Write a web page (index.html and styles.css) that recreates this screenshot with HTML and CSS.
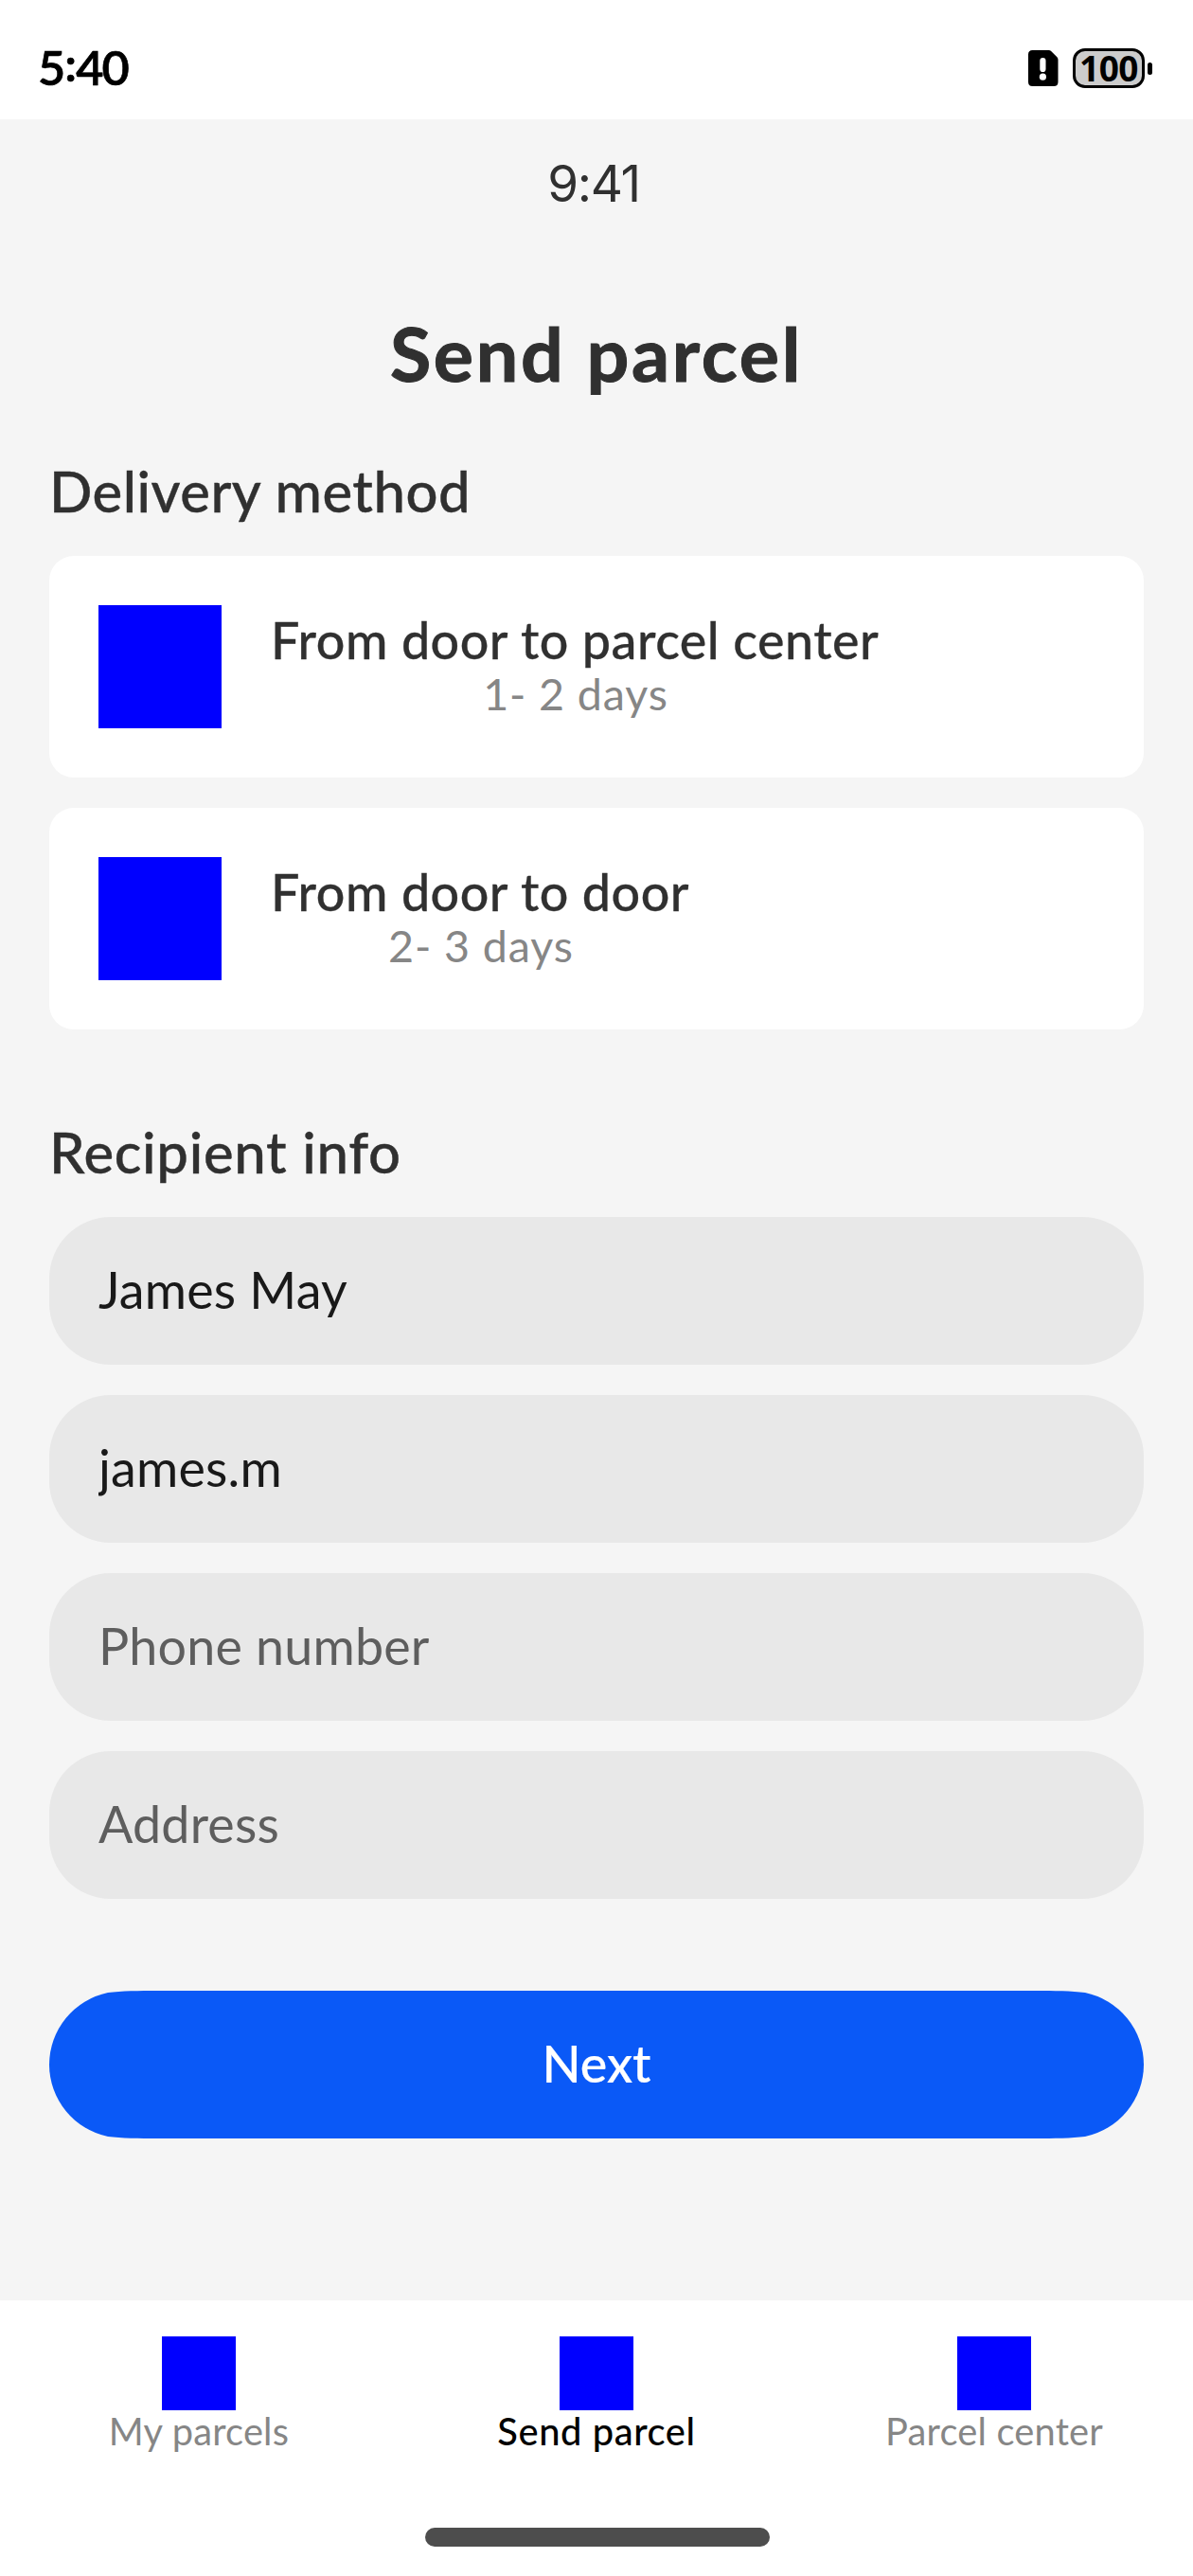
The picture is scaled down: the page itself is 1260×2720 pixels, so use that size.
FILE: index.html
```html
<!DOCTYPE html>
<html lang="en">
<head>
  <meta charset="utf-8">
  <title>Send parcel</title>
  <link rel="stylesheet" href="styles.css">
</head>
<body>
  <header class="status-bar">
    <span class="status-time">5<span class="colon">:</span>40</span>
    <div class="status-icons">
      <svg class="sim" width="32" height="38" viewBox="0 0 32 38">
        <path d="M4.5 0H21.5Q23.2 0 24.4 1.2L30.4 7.2Q31.5 8.4 31.5 10V33.5Q31.5 38 27 38H4.5Q0 38 0 33.5V4.500Q0 0 4.500 0Z" fill="#000"/>
        <rect x="12.300" y="8" width="6.200" height="15" rx="3.100" fill="#fff"/>
        <circle cx="15.400" cy="28.200" r="3.600" fill="#fff"/>
      </svg>
      <div class="battery">
        <span class="battery-level">100</span>
      </div>
      <span class="battery-tip"></span>
    </div>
  </header>

  <main class="page">
    <p class="clock">9:41</p>
    <h1 class="title">Send parcel</h1>

    <section class="section">
      <h2 class="section-title">Delivery method</h2>
      <div class="stack">
        <article class="card">
          <span class="card-image"></span>
          <div class="card-text">
            <span class="card-name">From door to parcel center</span>
            <span class="card-time">1- 2 days</span>
          </div>
        </article>
        <article class="card">
          <span class="card-image"></span>
          <div class="card-text">
            <span class="card-name">From door to door</span>
            <span class="card-time">2- 3 days</span>
          </div>
        </article>
      </div>
    </section>

    <section class="section recipient">
      <h2 class="section-title wide">Recipient info</h2>
      <form class="stack">
        <input class="field" type="text" value="James May">
        <input class="field" type="text" value="james.m">
        <input class="field" type="text" placeholder="Phone number">
        <input class="field" type="text" placeholder="Address">
        <button class="next" type="button">Next</button>
      </form>
    </section>
  </main>

  <footer class="bottom">
    <nav class="tabs">
      <a class="tab"><span class="tab-icon"></span>My parcels</a>
      <a class="tab active"><span class="tab-icon"></span>Send parcel</a>
      <a class="tab"><span class="tab-icon"></span>Parcel center</a>
    </nav>
    <span class="home-bar"></span>
  </footer>
</body>
</html>
```
FILE: styles.css
```css
* {
  box-sizing: border-box;
  margin: 0;
  padding: 0;
}

body {
  display: flex;
  flex-direction: column;
  width: 1260px;
  height: 2720px;
  background: #fff;
  color: #303030;
  font-family: Lato, "Noto Sans", sans-serif;
  overflow: hidden;
}

.status-bar {
  display: flex;
  flex: none;
  justify-content: space-between;
  align-items: center;
  height: 126px;
  padding: 18px 43px 0 40px;
  color: #000;
}

.status-time {
  font-size: 50.4px;
  font-weight: 600;
  line-height: 60px;
  letter-spacing: -1.9px;
  padding-bottom: 2px;
  -webkit-text-stroke: 0.7px;
}

.colon {
  margin: 0 1px;
  vertical-align: 4px;
  line-height: 1;
}

.status-icons {
  display: flex;
  align-items: center;
}

.sim {
  margin: 0 15px 1px 0;
}

.battery {
  display: flex;
  justify-content: center;
  align-items: center;
  width: 76px;
  height: 42px;
  border: 3px solid #000;
  border-radius: 13px;
  background: #ccc;
}

.battery-level {
  font-family: "Noto Sans", sans-serif;
  font-size: 37px;
  font-weight: 700;
  line-height: 36px;
  letter-spacing: -0.5px;
}

.battery-tip {
  width: 5px;
  height: 13px;
  margin-left: 3px;
  border-radius: 2.5px;
  background: #000;
}

.page {
  flex: none;
  height: 2303px;
  padding: 38px 52px 0;
  background: #f5f5f5;
}

.clock {
  font-family: Inter, sans-serif;
  font-size: 53px;
  line-height: 60px;
  letter-spacing: -1.3px;
  text-align: center;
  padding-right: 6px;
}

.title {
  margin-top: 99px;
  font-size: 79px;
  font-weight: 700;
  line-height: 100px;
  letter-spacing: 2.7px;
  text-align: center;
  -webkit-text-stroke: 1px;
}

.section-title {
  margin-top: 64px;
  font-size: 59.8px;
  font-weight: 500;
  line-height: 62px;
  letter-spacing: 0.5px;
  -webkit-text-stroke: 0.4px;
}

.section-title.wide {
  margin-top: 98px;
  letter-spacing: 0.7px;
}

.stack {
  display: flex;
  flex-direction: column;
  gap: 32px;
  margin-top: 38px;
}

.card {
  display: flex;
  align-items: center;
  gap: 52px;
  height: 234px;
  padding: 0 52px;
  border-radius: 26px;
  background: #fff;
}

.card-image {
  width: 130px;
  height: 130px;
  background: #00f;
}

.card-text {
  display: flex;
  flex-direction: column;
  align-items: center;
  padding-bottom: 6px;
}

.card-name {
  font-size: 53.8px;
  font-weight: 500;
  line-height: 62px;
  letter-spacing: 0.48px;
  -webkit-text-stroke: 0.3px;
}

.card-time {
  color: #868686;
  font-size: 46.6px;
  line-height: 53px;
  letter-spacing: 0.9px;
  padding-left: 2px;
}

.field {
  width: 100%;
  height: 156px;
  padding: 0 52px 4px;
  border: 0;
  border-radius: 65px;
  background: #e8e8e8;
  color: #191919;
  font: 400 53.8px Lato, "Noto Sans", sans-serif;
  letter-spacing: 0.2px;
}

.field::placeholder {
  color: #5e5e5e;
  opacity: 1;
}

.next {
  height: 156px;
  margin-top: 65px;
  padding-bottom: 4px;
  border: 0;
  background: #0a59f7;
  color: #fff;
  font: 500 53.8px Lato, "Noto Sans", sans-serif;
  -webkit-text-stroke: 0.2px;
  /* capsule with ends that ease into the straight edges */
  clip-path: path("M0 78A78 78 0 0 1 62 2C76 .3 95 0 115 0H1041C1061 0 1080 .3 1094 2A78 78 0 0 1 1156 78A78 78 0 0 1 1094 154C1080 155.7 1061 156 1041 156H115C95 156 76 155.7 62 154A78 78 0 0 1 0 78Z");
}

.bottom {
  display: flex;
  flex: 1;
  flex-direction: column;
  align-items: center;
  padding-top: 38px;
}

.tabs {
  display: grid;
  grid-template-columns: repeat(3, 1fr);
  width: 100%;
}

.tab {
  display: flex;
  flex-direction: column;
  align-items: center;
  color: #868686;
  font-size: 39.8px;
  line-height: 42px;
  letter-spacing: 0.2px;
}

.tab.active {
  color: #000;
  font-weight: 500;
  letter-spacing: 0.6px;
}

.tab-icon {
  width: 78px;
  height: 78px;
  margin-bottom: 1px;
  background: #00f;
}

.home-bar {
  width: 364px;
  height: 20px;
  margin: 81px 0 0 1px;
  border-radius: 10px;
  background: #4d4d4d;
}
```
